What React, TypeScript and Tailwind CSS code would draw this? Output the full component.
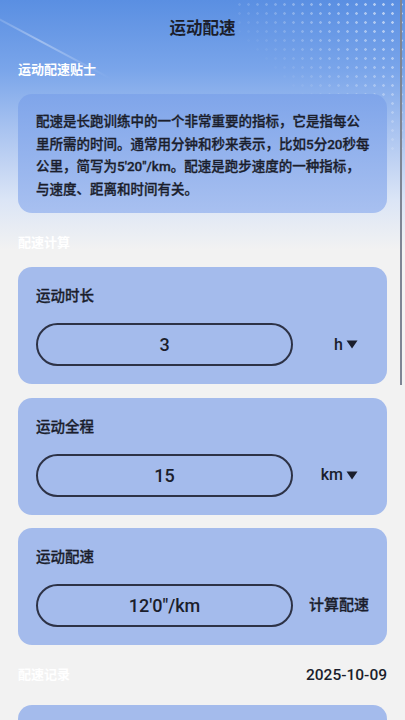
import React from "react";

const font = { fontFamily: 'Roboto, "Noto Sans CJK SC", "Noto Sans", sans-serif' };

function Triangle() {
  return (
    <svg width="12" height="9" viewBox="0 0 12 9" className="ml-[3px]">
      <path d="M0.5 0.5 H11.5 L6 8.5 Z" fill="#1b1e2c" />
    </svg>
  );
}

function Card({
  label,
  value,
  right,
}: {
  label: string;
  value: string;
  right: React.ReactNode;
}) {
  return (
    <div className="rounded-[14px] bg-[#a4bbec] px-[18px] pt-[20px] pb-[18px]">
      <div className="text-[14.5px] leading-[20px] font-medium text-[#1b1e2c] [-webkit-text-stroke:0.3px_#1b1e2c]">{label}</div>
      <div className="mt-[16px] flex items-center">
        <div className="flex h-[43px] w-[257px] items-center justify-center rounded-full border-2 border-[#2d3246]">
          <span className="text-[18px] font-medium text-[#1b1e2c]">{value}</span>
        </div>
        <div className="flex flex-1 items-center justify-end">{right}</div>
      </div>
    </div>
  );
}

export default function App() {
  return (
    <div
      className="relative min-h-[720px] w-full overflow-hidden bg-[#f2f2f2] bg-[linear-gradient(180deg,#5a8fe2_0px,#7aa5ea_70px,#a9c3f0_130px,#dbe5f6_200px,#f2f2f2_250px)]"
      style={font}
    >
      {/* decorative dots */}
      <div className="pointer-events-none absolute right-0 top-0 h-[150px] w-[170px] bg-[radial-gradient(circle,rgba(255,255,255,0.55)_1px,transparent_1.6px)] bg-[length:9px_9px] [mask-image:linear-gradient(225deg,black_10%,transparent_65%)]" />
      {/* decorative streak */}
      <div className="pointer-events-none absolute left-[-40px] top-[40px] h-[2px] w-[160px] rotate-[28deg] bg-[linear-gradient(90deg,transparent,rgba(255,255,255,0.35),transparent)]" />
      {/* scrollbar */}
      <div className="absolute right-[3px] top-0 h-[385px] w-[2px] bg-[#7f8594]" />

      <div className="relative px-[18px]">
        <div className="flex h-[58px] items-center justify-center">
          <span className="text-[16.5px] font-bold text-[#1b1e2c]">运动配速</span>
        </div>
        <div className="mt-[2px] text-[13px] leading-[20px] font-bold text-white">运动配速贴士</div>

        <div className="mt-[14px] rounded-[14px] bg-[linear-gradient(180deg,#7fa5ea,#a8c0f0)] px-[18px] pt-[16px] pb-[13px]">
          <p className="whitespace-nowrap text-[13.5px] leading-[22.5px] font-medium text-[#1b1e2c] [-webkit-text-stroke:0.3px_#1b1e2c]">
            配速是长跑训练中的一个非常重要的指标，它是指每公
            <br />
            里所需的时间。通常用分钟和秒来表示，比如5分20秒每
            <br />
            公里，简写为5'20"/km。配速是跑步速度的一种指标，
            <br />
            与速度、距离和时间有关。
          </p>
        </div>

        <div className="mt-[20px] text-[13px] leading-[20px] font-bold text-white">配速计算</div>

        <div className="mt-[14px] flex flex-col gap-[13.5px]">
          <Card
            label="运动时长"
            value="3"
            right={
              <div className="flex items-center pr-[11px]">
                <span className="text-[16px] font-medium text-[#1b1e2c]">h</span>
                <Triangle />
              </div>
            }
          />
          <Card
            label="运动全程"
            value="15"
            right={
              <div className="flex items-center pr-[11px]">
                <span className="text-[16px] font-medium text-[#1b1e2c]">km</span>
                <Triangle />
              </div>
            }
          />
          <Card
            label="运动配速"
            value={`12'0"/km`}
            right={<span className="text-[15px] font-medium text-[#1b1e2c] [-webkit-text-stroke:0.3px_#1b1e2c]">计算配速</span>}
          />
        </div>

        <div className="mt-[20px] flex items-center justify-between">
          <span className="text-[13px] leading-[20px] font-bold text-white">配速记录</span>
          <span className="text-[15.5px] leading-[20px] font-medium text-[#1b1e2c]">2025-10-09</span>
        </div>

        <div className="mt-[20px] h-[120px] rounded-[14px] bg-[#a4bbec]" />
      </div>
    </div>
  );
}
